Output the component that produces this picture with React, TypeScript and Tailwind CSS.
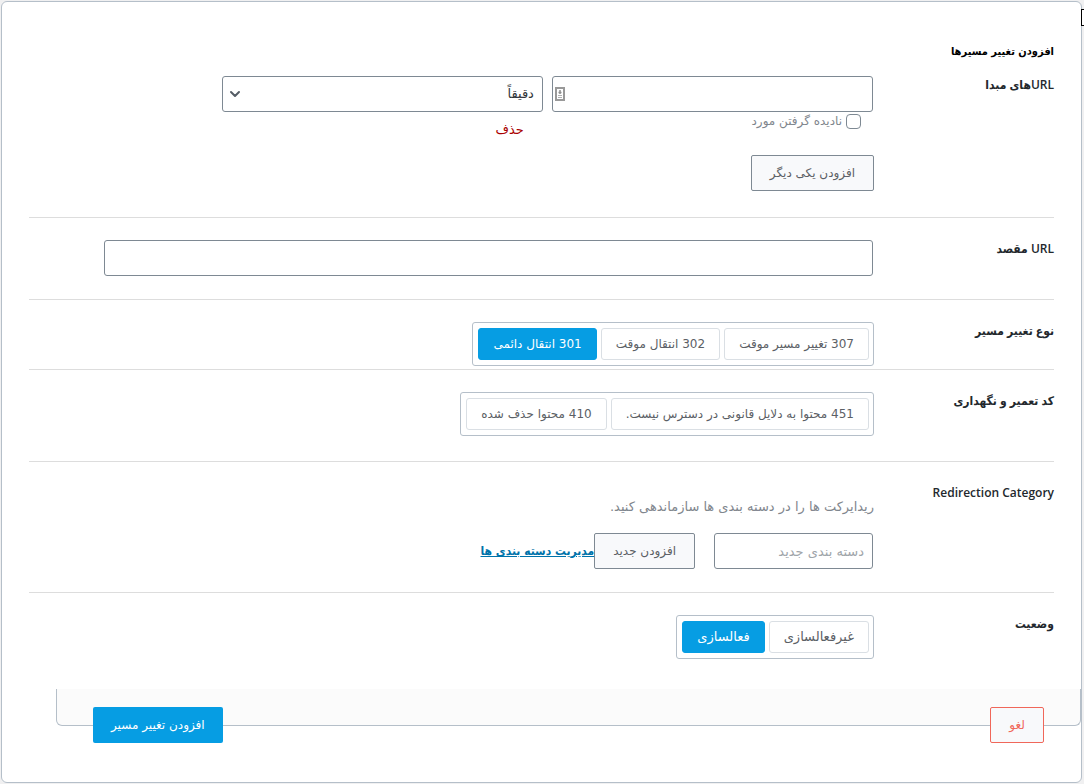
import React, { useState } from "react";
import { ChevronDown } from "lucide-react";

/* ------------------------------------------------------------------ */
/*  Constants                                                           */
/* ------------------------------------------------------------------ */
type Option = { value: string; label: string };

const REDIRECT_TYPES: Option[] = [
  { value: "307", label: "307 تغییر مسیر موقت" },
  { value: "302", label: "302 انتقال موقت" },
  { value: "301", label: "301 انتقال دائمی" },
];

const MAINTENANCE_CODES: Option[] = [
  { value: "451", label: "451 محتوا به دلایل قانونی در دسترس نیست." },
  { value: "410", label: "410 محتوا حذف شده" },
];

const STATUSES: Option[] = [
  { value: "inactive", label: "غیرفعالسازی" },
  { value: "active", label: "فعالسازی" },
];

const FIELD =
  "mr-px h-9 rounded-[3px] border border-[#7e8993] bg-white px-2 text-[13px] text-[#32373c] outline-none focus:border-[#069de3]";
const SECONDARY =
  "h-9 whitespace-nowrap rounded-[2px] border border-[#7e8993] bg-[#f8f9fb] text-[#5b6065]";

/* ------------------------------------------------------------------ */
/*  Row                                                                 */
/* ------------------------------------------------------------------ */
function Row({
  label,
  htmlFor,
  className,
  children,
}: {
  label: string;
  htmlFor?: string;
  className: string;
  children: React.ReactNode;
}) {
  const Tag = htmlFor ? "label" : "div";
  return (
    <div className={`flex items-start ${className}`}>
      <Tag
        htmlFor={htmlFor}
        className="w-[180px] flex-shrink-0 font-['Open_Sans','DejaVu_Sans_Condensed',sans-serif] font-semibold leading-[18px] text-[#23282d]"
      >
        {label}
      </Tag>
      <div className="min-w-0 flex-1">{children}</div>
    </div>
  );
}

/* ------------------------------------------------------------------ */
/*  Radio buttons shown as a segmented group                            */
/* ------------------------------------------------------------------ */
function RadioGroup({
  name,
  options,
  value,
  onChange,
  className = "",
}: {
  name: string;
  options: Option[];
  value: string;
  onChange: (value: string) => void;
  className?: string;
}) {
  return (
    <div
      className={`flex w-fit gap-1 rounded-[3px] border border-[#b5bfc9] py-[5px] pr-1 pl-[5px] ${className}`}
    >
      {options.map((o) => (
        <label
          key={o.value}
          className={`flex h-8 cursor-pointer items-center whitespace-nowrap rounded-[3px] border px-3.5 ${
            value === o.value
              ? "border-[#069de3] bg-[#069de3] text-white"
              : "border-[#dadfe4] bg-white text-[#5b6065]"
          }`}
        >
          <input
            type="radio"
            name={name}
            value={o.value}
            checked={value === o.value}
            onChange={() => onChange(o.value)}
            className="sr-only"
          />
          {o.label}
        </label>
      ))}
    </div>
  );
}

/* ------------------------------------------------------------------ */
/*  Page                                                                */
/* ------------------------------------------------------------------ */
export default function App() {
  const [source, setSource] = useState("");
  const [match, setMatch] = useState("exact");
  const [ignoreCase, setIgnoreCase] = useState(false);
  const [destination, setDestination] = useState("");
  const [type, setType] = useState("301");
  const [maintenance, setMaintenance] = useState("");
  const [category, setCategory] = useState("");
  const [status, setStatus] = useState("active");

  return (
    <div
      dir="rtl"
      className="relative min-h-screen overflow-hidden bg-[#f0f0f1] py-px pr-0.5 pl-px font-['DejaVu_Sans',sans-serif] text-[12px] leading-5"
    >
      <form
        onSubmit={(e) => e.preventDefault()}
        className="rounded-md border border-[#b5bfc9] bg-white px-[27px] pt-10 pb-14"
      >
        <h2 className="font-['DejaVu_Sans_Condensed',sans-serif] text-[11px] font-bold text-black">
          افزودن تغییر مسیرها
        </h2>

        <Row
          label="URLهای مبدا"
          htmlFor="source"
          className="border-b border-[#dddddd] pt-3.5 pb-[26px]"
        >
          <div className="flex gap-[9px]">
            <div className="w-[38%]">
              <div className="relative">
                <input
                  id="source"
                  type="text"
                  value={source}
                  onChange={(e) => setSource(e.target.value)}
                  className={`block w-full ${FIELD}`}
                />
                <svg
                  viewBox="0 0 10 14"
                  className="absolute top-[11px] left-0.5 h-3.5 w-2.5"
                  fill="none"
                >
                  <rect x="1" y="1" width="8" height="12" fill="#fff" stroke="#999" strokeWidth="2" />
                  <path d="M5 3v4M3.5 5.5h3" stroke="#8e8e8e" strokeWidth="1.5" />
                  <path d="M3 8.5h4M3 10.5h4" stroke="#b0b0b0" />
                </svg>
              </div>
              <label className="flex h-[18px] items-center gap-1 pr-[13px] text-[#7f868d]">
                <input
                  type="checkbox"
                  checked={ignoreCase}
                  onChange={(e) => setIgnoreCase(e.target.checked)}
                  className="h-[15px] w-[15px] appearance-none rounded-[4px] border border-[#7e8993] bg-white checked:bg-[#069de3]"
                />
                نادیده گرفتن مورد
              </label>
            </div>
            <div className="w-[38%]">
              <div className="relative">
                <select
                  aria-label="دقیقاً"
                  value={match}
                  onChange={(e) => setMatch(e.target.value)}
                  className={`block w-full appearance-none ${FIELD}`}
                >
                  <option value="exact">دقیقاً</option>
                </select>
                <ChevronDown
                  strokeWidth={3}
                  className="pointer-events-none absolute top-2.5 left-1 h-4 w-4 text-[#555d66]"
                />
              </div>
              <button type="button" className="mt-2 mr-5 block text-[13px] leading-5 text-[#a00]">
                حذف
              </button>
            </div>
          </div>
          <button type="button" className={`mt-[15px] px-[18px] ${SECONDARY}`}>
            افزودن یکی دیگر
          </button>
        </Row>

        <Row
          label="URL مقصد"
          htmlFor="destination"
          className="border-b border-[#dddddd] pt-[22px] pb-[23px]"
        >
          <input
            id="destination"
            type="text"
            value={destination}
            onChange={(e) => setDestination(e.target.value)}
            className={`block w-[91%] ${FIELD}`}
          />
        </Row>

        <Row label="نوع تغییر مسیر" className="border-b border-[#dddddd] pt-[22px] pb-[3px]">
          <RadioGroup name="type" options={REDIRECT_TYPES} value={type} onChange={setType} />
        </Row>

        <Row label="کد تعمیر و نگهداری" className="border-b border-[#dddddd] pt-[22px] pb-[25px]">
          <RadioGroup
            name="maintenance"
            options={MAINTENANCE_CODES}
            value={maintenance}
            onChange={setMaintenance}
          />
        </Row>

        <Row
          label="Redirection Category"
          htmlFor="category"
          className="border-b border-[#dddddd] pt-[22px] pb-[23px]"
        >
          <p className="pt-[13px] text-[13px] leading-5 text-[#7f868d]">
            ریدایرکت ها را در دسته بندی ها سازماندهی کنید.
          </p>
          <div className="mt-4 flex items-center">
            <input
              id="category"
              type="text"
              value={category}
              onChange={(e) => setCategory(e.target.value)}
              placeholder="دسته بندی جدید"
              className={`ml-[19px] w-[159px] placeholder:text-[#a0a5aa] ${FIELD}`}
            />
            <button type="button" className={`px-[18px] ${SECONDARY}`}>
              افزودن جدید
            </button>
            <a
              href="#categories"
              className="font-['DejaVu_Sans_Condensed',sans-serif] font-bold text-[#0073aa] underline"
            >
              مدیریت دسته بندی ها
            </a>
          </div>
        </Row>

        <Row label="وضعیت" className="pt-[22px] pb-[30px]">
          <RadioGroup
            name="status"
            options={STATUSES}
            value={status}
            onChange={setStatus}
            className="text-[13px]"
          />
        </Row>

        {/* Buttons hang over the bottom edge of the footer */}
        <div className="mr-[-27px] ml-[27px] flex h-[37px] items-start justify-between rounded-b-md border border-t-0 border-[#b5bfc9] bg-[#fbfbfb] px-9 pt-[18px]">
          <button
            type="button"
            className="h-9 rounded-[2px] border border-[#f0675a] bg-[#f8f9fb] px-[18px] text-[#f0675a]"
          >
            لغو
          </button>
          <button type="submit" className="h-9 rounded-[2px] bg-[#069de3] px-[18px] text-white">
            افزودن تغییر مسیر
          </button>
        </div>
      </form>

      {/* Edge of the screen options tab */}
      <div className="absolute top-[9px] right-[-9px] h-[17px] w-3 border border-black bg-white" />
    </div>
  );
}
